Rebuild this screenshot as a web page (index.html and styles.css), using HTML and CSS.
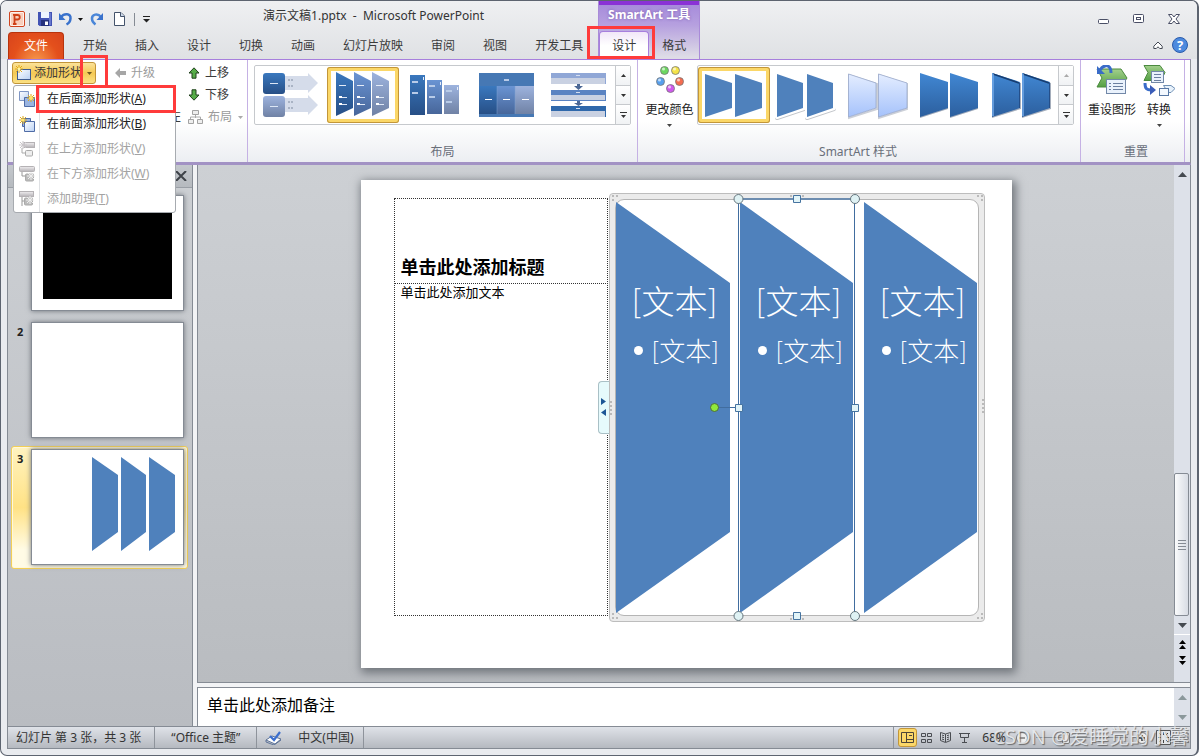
FILE: index.html
```html
<!DOCTYPE html>
<html lang="zh-CN">
<head>
<meta charset="utf-8">
<title>演示文稿1.pptx - Microsoft PowerPoint</title>
<link rel="stylesheet" href="styles.css">
</head>
<body>
<svg class="defs" width="0" height="0" aria-hidden="true">
  <defs>
    <linearGradient id="b1" x1="0" y1="0" x2="0" y2="1"><stop offset="0" stop-color="#3a78be"/><stop offset="1" stop-color="#274f86"/></linearGradient>
    <linearGradient id="b2" x1="0" y1="0" x2="0" y2="1"><stop offset="0" stop-color="#6a94d3"/><stop offset="1" stop-color="#47669a"/></linearGradient>
    <linearGradient id="b3" x1="0" y1="0" x2="0" y2="1"><stop offset="0" stop-color="#9db3de"/><stop offset="1" stop-color="#7082a5"/></linearGradient>
    <linearGradient id="pale" x1="0" y1="0" x2="0" y2="1"><stop offset="0" stop-color="#e4edff"/><stop offset="1" stop-color="#a5c2fb"/></linearGradient>
    <linearGradient id="deep" x1="0" y1="0" x2="0" y2="1"><stop offset="0" stop-color="#4187d3"/><stop offset="1" stop-color="#2c5f9e"/></linearGradient>
    <linearGradient id="page" x1="0" y1="0" x2="1" y2="1"><stop offset="0" stop-color="#fff"/><stop offset="1" stop-color="#b9d0f3"/></linearGradient>
    <linearGradient id="leaf" x1="0" y1="0" x2="0" y2="1"><stop offset="0" stop-color="#a3d08c"/><stop offset="1" stop-color="#54a044"/></linearGradient>
    <linearGradient id="grey" x1="0" y1="0" x2="0" y2="1"><stop offset="0" stop-color="#f0eef0"/><stop offset="1" stop-color="#b5b2b6"/></linearGradient>
    <g id="spark" stroke-width="1"><path d="M4 0v8M0 4h8M1 1l6 6M7 1l-6 6"/></g>
  </defs>
</svg>
<div class="window">
  <header class="header">
    <div class="head-left">
      <div class="title-row">
        <div class="qat">
          <svg width="16" height="16" viewBox="0 0 16 16"><rect x=".5" y=".5" width="15" height="15" rx="1.500" fill="#fff1ea" stroke="#cf4520"/><rect x="2" y="2" width="12" height="12" fill="#f8cfbd"/><path d="M5.500 13V4h3a2.200 2.200 0 0 1 0 4.500H6M4 13h3.500M4 3.800h3" fill="none" stroke="#cf3f16" stroke-width="1.800"/></svg>
          <i class="bar"></i>
          <button class="plain" aria-label="保存"><svg width="14" height="14" viewBox="0 0 14 14"><path d="M0 0h14v14H1.500L0 12.500z" fill="#4253b4"/><path d="M3 0h8v6H3z" fill="#eef4ff"/><path d="M3 8h8v6H3z" fill="#26327c"/><path d="M7 9.500h3V13H7z" fill="#fff"/><path d="M12 1v12" stroke="#8fa0e8"/></svg></button>
          <button class="plain undo" aria-label="撤消"><svg width="14" height="14" viewBox="0 0 14 14"><path d="M2 5C5 1 12 1 11.500 6.500 11.300 9.500 9.500 11.500 7.500 12.500" fill="none" stroke="#3a72cc" stroke-width="2.500"/><path d="M0 1v7h6.500z" fill="#3a72cc"/></svg><svg width="5" height="3" viewBox="0 0 5 3"><path d="M0 0h5L2.500 3z" fill="#111"/></svg></button>
          <button class="plain" aria-label="恢复"><svg width="14" height="14" viewBox="0 0 14 14"><path d="M11 5C8 1 1.500 2 2 7c.2 3 2 4.500 3.500 5.500" fill="none" stroke="#4a86d8" stroke-width="2.500"/><path d="M13 1v7H6.500z" fill="#3a72cc"/></svg></button>
          <button class="plain new" aria-label="新建"><svg width="11" height="14" viewBox="0 0 11 14"><path d="M.5.5h6.500l3.500 3.500v9.500H.5z" fill="#fff" stroke="#44536b"/><path d="M6.500.5v4h4" fill="#cbd8ea" stroke="#44536b"/></svg></button>
          <i class="bar"></i>
          <button class="plain" aria-label="自定义快速访问工具栏"><svg width="7" height="7" viewBox="0 0 7 7"><path d="M0 .5h7" stroke="#222"/><path d="M0 3h7L3.500 6.500z" fill="#222"/></svg></button>
        </div>
        <h1 class="title">演示文稿1.pptx&nbsp; -&nbsp; Microsoft PowerPoint</h1>
      </div>
      <nav class="tabs">
        <button class="file-tab">文件</button>
        <button class="tab">开始</button><button class="tab">插入</button><button class="tab">设计</button><button class="tab">切换</button><button class="tab">动画</button><button class="tab">幻灯片放映</button><button class="tab">审阅</button><button class="tab">视图</button><button class="tab">开发工具</button>
      </nav>
    </div>
    <div class="context">
      <div class="context-name">SmartArt 工具</div>
      <nav class="context-tabs"><button class="tab active">设计</button><button class="tab">格式</button></nav>
      <i class="mark mark-tab"></i>
    </div>
    <div class="head-right">
      <div class="win-buttons">
        <button class="plain" aria-label="最小化"><svg width="12" height="12" viewBox="0 0 12 12"><rect x=".5" y="6.500" width="10" height="4" rx="1" fill="#fff" stroke="#4a4f66"/></svg></button>
        <button class="plain" aria-label="最大化"><svg width="12" height="12" viewBox="0 0 12 12"><rect x=".5" y="1.500" width="10" height="8" rx="1" fill="#fff" stroke="#4a4f66"/><rect x="3.500" y="4.500" width="4" height="2" fill="#fff" stroke="#4a4f66"/></svg></button>
        <button class="plain" aria-label="关闭"><svg width="12" height="12" viewBox="0 0 12 12"><path d="M.5 1.500h3.500l2 2.500 2-2.500h3.500L8 6l3.500 4.500H8L6 8l-2 2.500H.5L4 6z" fill="#fff" stroke="#4a4f66"/></svg></button>
      </div>
      <div class="help-row">
        <button class="plain" aria-label="功能区最小化"><svg width="10" height="9" viewBox="0 0 10 9"><path d="M5 1L.8 5.200v2.300h2.500L5 5.800l1.700 1.700h2.500V5.200z" fill="#fff" stroke="#444a55"/></svg></button>
        <button class="help" aria-label="帮助">?</button>
      </div>
    </div>
  </header>

  <section class="ribbon">
    <div class="group create">
      <div class="commands">
        <div class="split">
          <button class="split-main"><svg width="16" height="16" viewBox="0 0 16 16"><rect x="2.500" y="4.500" width="13" height="10" fill="url(#page)" stroke="#3f5c92"/><use href="#spark" stroke="#e0a818"/><circle cx="4" cy="4" r="1.500" fill="#fff4a0"/></svg><span>添加形状</span></button>
          <button class="split-drop" aria-label="添加形状选项"><svg width="5" height="3"><path d="M0 0h5L2.500 3z" fill="#6b5622"/></svg></button>
        </div>
        <button class="cmd off"><svg width="11" height="10" viewBox="0 0 11 10"><path d="M0 5l5-5v3h6v4H5v3z" fill="#a6a6a6"/></svg>升级</button>
        <button class="cmd"><svg width="12" height="12" viewBox="0 0 12 12"><path d="M6 .8L11 6H8v5.200H4V6H1z" fill="#56ac48" stroke="#20401c"/></svg>上移</button>
        <button class="cmd low"><svg width="12" height="12" viewBox="0 0 12 12"><path d="M6 11.200L11 6H8V.8H4V6H1z" fill="#56ac48" stroke="#20401c"/></svg>下移</button>
        <button class="cmd rtl" aria-label="从右向左">左</button>
        <button class="cmd off wide"><svg width="15" height="14" viewBox="0 0 15 14"><path d="M7.500 4v4M2.500 9V7h10v2" fill="none" stroke="#aaa"/><path d="M4.500.5h6v4h-6zM.5 9.500h5v4h-5zM9.500 9.500h5v4h-5z" fill="#eee" stroke="#a3a3a3"/></svg>布局<svg class="caret" width="5" height="3"><path d="M0 0h5L2.500 3z" fill="#aaa"/></svg></button>
      </div>
      <i class="mark mark-drop"></i>
      <div class="menu" role="menu">
        <button class="item" role="menuitem"><svg width="16" height="16" viewBox="0 0 16 16"><path d="M.5.5h9v9h-9z" fill="url(#page)" stroke="#7f96c4"/><path d="M5.500 6.500h10v9h-10z" fill="#9ab4e0" stroke="#4f6ca6"/><use href="#spark" x="8" y="3" stroke="#e0a818"/><circle cx="12" cy="7" r="2" fill="#ffe66a"/></svg><span>在后面添加形状(<u>A</u>)</span></button>
        <button class="item" role="menuitem"><svg width="16" height="16" viewBox="0 0 16 16"><path d="M3.500 2.500h8v8h-8z" fill="#9ab4e0" stroke="#4f6ca6"/><path d="M5.500 5.500h10v10h-10z" fill="url(#page)" stroke="#4f6ca6"/><use href="#spark" stroke="#e0a818"/><circle cx="4" cy="4" r="1.500" fill="#ffe66a"/></svg><span>在前面添加形状(<u>B</u>)</span></button>
        <button class="item" role="menuitem" disabled><svg width="16" height="16" viewBox="0 0 16 16"><rect x="5" y="1.500" width="10.500" height="5" fill="url(#grey)" stroke="#b5b2b5"/><path d="M3 7v5h3" fill="none" stroke="#aaa"/><rect x="6.500" y="9.500" width="7" height="5.500" rx="1" fill="#eee" stroke="#aaa"/><use href="#spark" stroke="#c9c5c9"/></svg><span>在上方添加形状(<u>V</u>)</span></button>
        <button class="item" role="menuitem" disabled><svg width="16" height="16" viewBox="0 0 16 16"><rect x=".5" y=".5" width="15" height="5" rx="1" fill="url(#grey)" stroke="#b5b2b5"/><path d="M3 6v4h4" fill="none" stroke="#999"/><rect x="6.500" y="8" width="8" height="7" rx="1" fill="#bbb" stroke="#aaa"/><use href="#spark" x="8" y="6" stroke="#eee"/></svg><span>在下方添加形状(<u>W</u>)</span></button>
        <button class="item" role="menuitem" disabled><svg width="16" height="16" viewBox="0 0 16 16"><rect x=".5" y=".5" width="14" height="5" fill="url(#grey)" stroke="#b5b2b5"/><path d="M3 6v9M3 10h4" fill="none" stroke="#999"/><rect x="5.500" y="7" width="8" height="7" rx="1" fill="#bbb" stroke="#aaa"/><use href="#spark" x="7" y="5" stroke="#eee"/></svg><span>添加助理(<u>T</u>)</span></button>
        <i class="mark mark-item"></i>
      </div>
    </div>

    <div class="group layouts">
      <div class="gallery">
        <button class="thumb" aria-label="垂直块列表"><svg width="72" height="56" viewBox="0 0 72 56"><path d="M30 9h23V6l10 10-10 10v-3H30zM30 31h23v-3l10 10-10 10v-3H30z" fill="#d5dcea"/><rect x="8" y="6" width="22" height="21" rx="3" fill="url(#b1)"/><rect x="8" y="29" width="22" height="21" rx="3" fill="url(#b3)"/><path d="M15 16.500h8M15 39.500h8" stroke="#dce6f5"/><path d="M33 13h6M33 19h6M33 35h6M33 41h6" stroke="#a9b3c4" stroke-width="2" stroke-dasharray="2 1"/></svg></button>
        <button class="thumb on" aria-label="梯形列表"><svg width="72" height="56" viewBox="0 0 72 56"><path d="M9 5l17 9v27L9 49z" fill="url(#b1)"/><path d="M27 5l17 9v27l-17 8z" fill="url(#b2)"/><path d="M45 5l17 9v27l-17 8z" fill="url(#b3)"/><path d="M12 18.500h7M30 18.500h7M49 18.500h7" stroke="#e4ecf8"/><path d="M12 30.500h8M12 37.500h8M30 30.500h8M30 37.500h8M49 30.500h8M49 37.500h8" stroke="#dfe8f6"/><path d="M12 30h3M12 37h3M30 30h3M30 37h3M49 30h3M49 37h3" stroke="#fff" stroke-width="2"/></svg></button>
        <button class="thumb" aria-label="降序块列表"><svg width="72" height="56" viewBox="0 0 72 56"><path d="M11 8h15v40H11z" fill="url(#b1)"/><path d="M28 13h15v34H28z" fill="url(#b2)"/><path d="M45 18h15v29H45z" fill="url(#b3)"/><path d="M13 15h6M13 26h6M30 19h6M30 30h6M47 24h6M47 35h6" stroke="#b8cbe8" stroke-width="2"/><path d="M24.500 10v3M41.500 15v3M58.500 20v3" stroke="#e8eef8"/></svg></button>
        <button class="thumb" aria-label="表格列表"><svg width="72" height="56" viewBox="0 0 72 56"><path d="M8 6h55v44H8z" fill="#4678b4"/><path d="M8 19h18v28H8z" fill="url(#b1)"/><path d="M26 19h18v28H26z" fill="url(#b2)"/><path d="M44 19h19v28H44z" fill="url(#b3)"/><path d="M33 13h5" stroke="#b8cbe8" stroke-width="2"/><path d="M14 32.500h7M32 32.500h7M51 32.500h7" stroke="#fff"/><path d="M26 19v28M44 19v28" stroke="#7fa0d0" stroke-width=".5"/></svg></button>
        <button class="thumb" aria-label="分段流程"><svg width="72" height="56" viewBox="0 0 72 56"><path d="M8 6h55v11H8z" fill="#90a7d6"/><path d="M8 23h55v11H8z" fill="#5a83c2"/><path d="M8 39h55v11H8z" fill="#2f68ab"/><path d="M8 11h54v6H8zM8 28h54v5H8zM8 44h54v6H8z" fill="#c9d1e2"/><path d="M34 17h3v2h3l-4.500 4L31 19h3zM34 34h3v2h3l-4.500 3L31 36h3z" fill="#4c6896"/><path d="M33 8.500h4M33 25.500h4M33 41.500h4" stroke="#d4def0"/></svg></button>
        <div class="stepper"><button aria-label="上一行"><svg width="5" height="3"><path d="M0 3h5L2.500 0z" fill="#333"/></svg></button><button aria-label="下一行"><svg width="5" height="3"><path d="M0 0h5L2.500 3z" fill="#333"/></svg></button><button aria-label="其他布局"><svg width="7" height="6"><path d="M0 .5h7" stroke="#333"/><path d="M1 3h5L3.500 6z" fill="#333"/></svg></button></div>
      </div>
      <div class="label">布局</div>
    </div>

    <div class="group styles">
      <div class="style-row">
        <button class="big colors"><svg width="28" height="30" viewBox="0 0 28 30"><g stroke="#777" stroke-width=".8"><circle cx="8.500" cy="5.500" r="4" fill="#6cd860"/><circle cx="19.500" cy="5.500" r="4" fill="#f5e348"/><circle cx="4.500" cy="16.500" r="4" fill="#56a0ee"/><circle cx="23.500" cy="16.500" r="4" fill="#f46c50"/><circle cx="14.500" cy="23.500" r="4" fill="#cf58ec"/></g><g fill="#fff" opacity=".65"><circle cx="7.500" cy="4" r="1.500"/><circle cx="18.500" cy="4" r="1.500"/><circle cx="3.500" cy="15" r="1.500"/><circle cx="22.500" cy="15" r="1.500"/><circle cx="13.500" cy="22" r="1.500"/></g></svg><span>更改颜色</span><svg width="5" height="3"><path d="M0 0h5L2.500 3z" fill="#444"/></svg></button>
        <div class="gallery">
          <button class="thumb on" aria-label="简单填充"><svg width="72" height="56" viewBox="0 0 72 56"><path d="M7 7l27 9v25L7 50zM37 7l27 9v25l-27 9z" fill="#4f81bc"/></svg></button>
          <button class="thumb" aria-label="白色轮廓"><svg width="72" height="56" viewBox="0 0 72 56"><path d="M7 8l27 9v25L7 51zM37 8l27 9v25l-27 9z" fill="none" stroke="#c3c6cb" stroke-width="4" stroke-linejoin="round"/><path d="M7 7l27 9v25L7 50zM37 7l27 9v25l-27 9z" fill="none" stroke="#fff" stroke-width="4" stroke-linejoin="round"/><path d="M7 7l26 9v25L7 50zM37 7l26 9v25l-26 9z" fill="#4f81bc"/></svg></button>
          <button class="thumb" aria-label="细微效果"><svg width="72" height="56" viewBox="0 0 72 56"><path d="M7 8l28 9v25L7 51zM37 8l28 9v25l-28 9z" fill="none" stroke="#ccd0d8" stroke-width="2"/><path d="M6.500 7L34 16v25L6.500 50zM36.500 7L65 16v25l-28.500 9z" fill="url(#pale)" stroke="#9aa9cc" stroke-width=".8"/></svg></button>
          <button class="thumb" aria-label="中等效果"><svg width="72" height="56" viewBox="0 0 72 56"><path d="M6 7l28 9v26L6 51zM36 7l28 9v26l-28 9z" fill="#9faaba"/><path d="M6 6l28 9v26L6 50zM36 6l28 9v26l-28 9z" fill="url(#deep)"/></svg></button>
          <button class="thumb" aria-label="强烈效果"><svg width="72" height="56" viewBox="0 0 72 56"><path d="M6 7l29 9v26L6 51zM36 7l29 9v26l-29 9z" fill="#a5aebc"/><path d="M6 6l28 9v26L6 50zM36 6l28 9v26l-28 9z" fill="url(#deep)"/><path d="M7 7l26 9M37 7l26 9" stroke="#173d70" stroke-width="1.500"/><path d="M7 7v42M37 7v42" stroke="#74abea" stroke-width="1.500"/><path d="M33.500 16v25M63.500 16v25" stroke="#244f8a"/></svg></button>
          <div class="stepper"><button aria-label="上一行样式" disabled><svg width="5" height="3"><path d="M0 3h5L2.500 0z" fill="#aaa"/></svg></button><button aria-label="下一行样式"><svg width="5" height="3"><path d="M0 0h5L2.500 3z" fill="#333"/></svg></button><button aria-label="其他样式"><svg width="7" height="6"><path d="M0 .5h7" stroke="#333"/><path d="M1 3h5L3.500 6z" fill="#333"/></svg></button></div>
        </div>
      </div>
      <div class="label">SmartArt 样式</div>
    </div>

    <div class="group reset">
      <div class="reset-row">
        <button class="big"><svg width="32" height="30" viewBox="0 0 32 30"><path d="M1 4h24l6 9-6 9H1l5-9z" fill="url(#leaf)" stroke="#4b8a3f"/><rect x="10.500" y="14.500" width="19" height="14" fill="#eaf2fc" stroke="#7288a8"/><path d="M13 18.500h2M17 18.500h10M13 21.500h2M17 21.500h10M13 24.500h2M17 24.500h10" stroke="#6a7fa0"/><path d="M4 5C8-1 15-1 15 8" fill="none" stroke="#3a6cc8" stroke-width="3"/><path d="M1 1v8h8z" fill="#3a6cc8"/></svg><span>重设图形</span></button>
        <button class="big"><svg width="32" height="32" viewBox="0 0 32 32"><path d="M1 .5h16l5 7-4 8H1l4-8z" fill="url(#leaf)" stroke="#4b8a3f"/><rect x="8.500" y="6.500" width="12" height="11" fill="#eaf2fc" stroke="#7288a8"/><path d="M11 9.500h7M11 12.500h7M11 15.500h7" stroke="#6a7fa0"/><path d="M2 18c0 6 2 7 6 7" fill="none" stroke="#3a6cc8" stroke-width="3"/><path d="M7 20l6 5-6 5z" fill="#3a5cb8"/><path d="M20.500 20.500H28l4 3-4 4h-7.500l2-4z" fill="#e8f2fb" stroke="#6f8fb4"/><rect x="16.500" y="23.500" width="9" height="7" fill="#f4f9ff" stroke="#5878a4"/></svg><span>转换</span><svg width="5" height="3"><path d="M0 0h5L2.500 3z" fill="#444"/></svg></button>
      </div>
      <div class="label">重置</div>
    </div>
  </section>

  <main class="work">
    <aside class="panel">
      <div class="panel-head"><button class="plain" aria-label="关闭窗格"><svg width="12" height="10" viewBox="0 0 12 10"><path d="M1 0l10 10M11 0L1 10" stroke="#3e4248" stroke-width="2"/></svg></button></div>
      <ol class="slides">
        <li class="entry"><b></b><div class="mini"><div class="black"></div></div></li>
        <li class="entry"><b>2</b><div class="mini"></div></li>
        <li class="entry current"><b>3</b><div class="mini"><svg width="151" height="114" viewBox="0 0 151 114"><path d="M60 7l26 18v57L60 101zM89 7l25 18v57l-25 19zM117 7l26 18v57l-26 19z" fill="#4f81bc"/></svg></div></li>
      </ol>
    </aside>
    <div class="editor">
      <div class="stage">
        <div class="stage-view">
          <article class="slide">
            <h2 class="slide-title">单击此处添加标题</h2>
            <p class="slide-body">单击此处添加文本</p>
            <div class="frame"><div class="frame-inner"></div></div>
            <svg class="art" width="651" height="488" viewBox="0 0 651 488">
              <path d="M255 22l114 81v249l-114 81zM379 22l113 81v249l-113 81zM503 22l113 81v249l-113 81z" fill="#4f81bc"/>
              <g fill="#aaa"><circle cx="252" cy="16" r="1"/><circle cx="256" cy="16" r="1"/><circle cx="252" cy="20" r="1"/><circle cx="617" cy="16" r="1"/><circle cx="621" cy="16" r="1"/><circle cx="621" cy="20" r="1"/><circle cx="252" cy="438" r="1"/><circle cx="256" cy="438" r="1"/><circle cx="252" cy="434" r="1"/><circle cx="617" cy="438" r="1"/><circle cx="621" cy="438" r="1"/><circle cx="621" cy="434" r="1"/><circle cx="250" cy="222" r="1"/><circle cx="250" cy="226" r="1"/><circle cx="250" cy="230" r="1"/><circle cx="250" cy="234" r="1"/><circle cx="622" cy="220" r="1"/><circle cx="622" cy="224" r="1"/><circle cx="622" cy="228" r="1"/><circle cx="622" cy="232" r="1"/><circle cx="430" cy="16" r="1"/><circle cx="434" cy="16" r="1"/><circle cx="438" cy="16" r="1"/><circle cx="442" cy="16" r="1"/><circle cx="430" cy="439" r="1"/><circle cx="434" cy="439" r="1"/><circle cx="438" cy="439" r="1"/><circle cx="442" cy="439" r="1"/></g>
              <path d="M378.500 22v411" stroke="#fff"/>
              <path d="M377.500 19.500V436M493.500 19.500V436" stroke="#416d9f"/><path d="M378 19h116" stroke="#6d8db0" stroke-width="2"/><path d="M357 227.500h18" stroke="#416d9f"/>
              <g fill="#dff2f4" stroke="#66767e"><circle cx="377.500" cy="19" r="4.500"/><circle cx="494" cy="19" r="4.500"/><circle cx="377.500" cy="436" r="4.500"/><circle cx="494" cy="436" r="4.500"/></g>
              <g fill="#e2f4f8" stroke="#4674a0"><path d="M432.500 15.500h7v7h-7zM432.500 432.500h7v7h-7zM374.500 224.500h7v7h-7zM490.500 224.500h7v7h-7z"/></g>
              <circle cx="353.500" cy="227.500" r="4" fill="#90e83a" stroke="#4d6b3c"/>
            </svg>
            <div class="shape-text first"><strong>[文本]</strong><span>[文本]</span></div>
            <div class="shape-text second"><strong>[文本]</strong><span>[文本]</span></div>
            <div class="shape-text third"><strong>[文本]</strong><span>[文本]</span></div>
            <button class="pane-tab" aria-label="文本窗格"><svg width="5" height="18" viewBox="0 0 5 18"><path d="M0 0l5 3.500L0 7zM5 11v7l-5-3.500z" fill="#1d5696"/></svg></button>
          </article>
        </div>
        <div class="scroll">
          <button class="arrow" aria-label="向上滚动"><svg width="9" height="5"><path d="M0 5h9L4.500 0z" fill="#454a50"/></svg></button>
          <div class="track"><div class="grip"><i></i><i></i><i></i><i></i></div></div>
          <button class="arrow" aria-label="向下滚动"><svg width="9" height="5"><path d="M0 0h9L4.500 5z" fill="#454a50"/></svg></button>
          <div class="page-buttons">
            <button class="plain" aria-label="上一张幻灯片"><svg width="7" height="9"><path d="M0 4h7L3.500 0zM0 9h7L3.500 5z"/></svg></button>
            <button class="plain" aria-label="下一张幻灯片"><svg width="7" height="9"><path d="M0 0h7L3.500 4zM0 5h7L3.500 9z"/></svg></button>
          </div>
        </div>
      </div>
      <div class="notes">
        <p class="notes-text">单击此处添加备注</p>
        <div class="scroll small">
          <button class="arrow" aria-label="备注向上滚动"><svg width="9" height="5"><path d="M0 5h9L4.500 0z" fill="#8b989b"/></svg></button>
          <button class="arrow" aria-label="备注向下滚动"><svg width="9" height="5"><path d="M0 0h9L4.500 5z" fill="#8b989b"/></svg></button>
        </div>
      </div>
    </div>
  </main>

  <footer class="status">
    <span class="cell count">幻灯片 第 3 张，共 3 张</span>
    <span class="cell theme">“Office 主题”</span>
    <span class="cell lang"><svg width="17" height="14" viewBox="0 0 17 14"><path d="M1 9l6-4 9 3-6 5z" fill="#fff" stroke="#5d7398"/><path d="M1 9v2l8 3 7-5" fill="none" stroke="#5d7398"/><path d="M5 5l4 4 6-8" fill="none" stroke="#3c6fce" stroke-width="2.200"/></svg>中文(中国)</span>
    <div class="status-right">
      <button class="view on" aria-label="普通视图"><svg width="13" height="11" viewBox="0 0 13 11"><path d="M.5.5h12v10H.5zM5.500.5v10M5.500 7.500h7M8 3.500h3" fill="none" stroke="#4c4538"/></svg></button>
      <button class="view" aria-label="幻灯片浏览"><svg width="11" height="10" viewBox="0 0 11 10"><path d="M.5.500h4v3h-4zM6.500.5h4v3h-4zM.5 6.500h4v3h-4zM6.500 6.500h4v3h-4z" fill="none" stroke="#4a4d52"/></svg></button>
      <button class="view" aria-label="阅读视图"><svg width="11" height="11" viewBox="0 0 11 11"><path d="M5.500 2L.5.500v8l5 2 5-2v-8zM5.500 2v8M2 3l2 .7M2 5l2 .7M2 7l2 .7M9 3l-2 .7M9 5l-2 .7M9 7l-2 .7" fill="none" stroke="#4a4d52"/></svg></button>
      <button class="view" aria-label="幻灯片放映视图"><svg width="11" height="10" viewBox="0 0 11 10"><path d="M0 .5h11M1.500.5v4h8v-4M5.500 5v4M3 9.500h5" fill="none" stroke="#4a4d52"/></svg></button>
      <span class="percent">68%</span>
      <button class="plain" aria-label="缩小"><svg width="12" height="12" viewBox="0 0 12 12"><circle cx="6" cy="6" r="5.500" fill="#eee" stroke="#777"/><path d="M3 6h6" stroke="#444"/></svg></button>
      <input class="zoom" type="range" min="10" max="400" value="130" aria-label="显示比例">
      <button class="plain" aria-label="放大"><svg width="12" height="12" viewBox="0 0 12 12"><circle cx="6" cy="6" r="5.500" fill="#eee" stroke="#777"/><path d="M3 6h6M6 3v6" stroke="#333" stroke-width="1.500"/></svg></button>
      <button class="plain fit" aria-label="适应窗口"><svg width="15" height="15" viewBox="0 0 15 15"><path d="M.5.5h14v14H.5z" fill="#e4e6e8" stroke="#555"/><path d="M7.500 2v3M7.500 10v3M2 7.500h3M10 7.500h3M3 3l2 2M12 3l-2 2M3 12l2-2M12 12l-2-2" stroke="#444"/></svg></button>
      <svg width="10" height="10" viewBox="0 0 10 10"><path d="M8 0h2v2H8zM4 4h2v2H4zM8 4h2v2H8zM0 8h2v2H0zM4 8h2v2H4zM8 8h2v2H8z" fill="#8d94a2"/></svg>
    </div>
  </footer>
  <div class="watermark">CSDN @爱睡觉的小馨</div>
</div>
</body>
</html>
```
FILE: styles.css
```css
* { box-sizing: border-box; }
body {
  margin: 0;
  background: #fff;
  font: 12px/16px "Noto Sans", "Noto Sans CJK SC", sans-serif;
  color: #3b3b3b;
}
button { font: inherit; color: inherit; border: 0; padding: 0; margin: 0; background: none; white-space: nowrap; }
h1, h2, p, ol { margin: 0; padding: 0; font-weight: normal; }
svg { display: block; flex: none; }
.defs { position: absolute; }
.plain { display: flex; align-items: center; }

.window {
  position: relative;
  display: flex;
  flex-direction: column;
  height: 100vh;
  min-height: 600px;
  padding: 0 6px 6px;
  border: 1px solid #5d6470;
  border-right-width: 2px;
  border-radius: 7px;
  background: #e9ebef;
  overflow: hidden;
}

/* title bar and tabs */
.header {
  display: flex;
  margin: 0 -6px;
  padding: 0 6px;
  background: linear-gradient(#eff0f2, #dfe1e4);
}
.head-left { display: flex; flex-direction: column; padding-right: 1px; }
.title-row { display: flex; height: 30px; align-items: center; }
.qat { display: flex; align-items: center; gap: 7px; padding: 6px 0 0 2px; }
.qat .bar { width: 1px; height: 13px; margin: 0 1px 0 -3px; background: #858b94; }
.qat .new { margin: 0 5px 0 3px; }
.undo { gap: 5px; }
.title { flex: 1; text-align: center; font-size: 12px; color: #333; }
.tabs, .context-tabs { display: flex; height: 28px; align-items: stretch; }
.tab { padding: 1px 14px 0; color: #3b3b3b; }
.file-tab {
  width: 56px;
  margin: 1px 5px 0 1px;
  border: 1px solid #b8330c;
  border-bottom: 0;
  border-radius: 4px 4px 0 0;
  color: #fff;
  background: radial-gradient(ellipse at 50% 120%, #f8a050 0, #e4501c 60%, #d8441c 100%);
}
.context {
  position: relative;
  width: 102px;
  border: 1px solid #a98bd8;
  border-width: 0 1px;
  background: linear-gradient(#8a32d6 4px, #a78cdb 4px, #b6a0df 24px, #dedce6 56px);
}
.context-name { height: 30px; padding-top: 6px; text-align: center; font-weight: bold; color: #fff; text-shadow: 0 0 3px #7b5cae; }
.context-tabs .tab { padding: 1px 13px 0; }
.context-tabs .active {
  border: 1px solid #a77fdd;
  border-bottom: 0;
  border-radius: 4px 4px 0 0;
  padding: 0 12px;
  background: linear-gradient(#f1e6f8, #fff 50%);
}
.head-right { flex: 1; display: flex; flex-direction: column; align-items: flex-end; }
.win-buttons { display: flex; gap: 23px; padding: 12px 11px 0 0; height: 34px; align-items: flex-start; }
.help-row { display: flex; align-items: center; gap: 9px; padding-right: 3px; height: 20px; }
.help {
  width: 16px;
  height: 16px;
  border-radius: 50%;
  border: 1px solid #2a5bab;
  background: #4d8ade;
  color: #fff;
  font-weight: bold;
  font-size: 13px;
  line-height: 14px;
}

/* call-out boxes */
.mark { position: absolute; border: 3px solid #ff3b3b; pointer-events: none; }
.mark-tab { left: -12px; top: 25px; width: 68px; height: 33px; }
.mark-drop { left: 72px; top: -5px; width: 28px; height: 33px; }
.mark-item { left: 22px; top: -1px; right: -1px; height: 28px; }

/* ribbon */
.ribbon {
  display: flex;
  height: 106px;
  border: 1px solid #8d9197;
  border-top-color: #a77fdd;
  border-bottom: 3px solid #a292c4;
  background: linear-gradient(#fff 60%, #eceef2);
}
.group { position: relative; display: flex; flex-direction: column; border-right: 1px solid #c5b1e4; }
.label { margin-top: auto; padding-bottom: 2px; text-align: center; color: #696f7a; }
.create { width: 240px; padding: 2px 0 0 4px; z-index: 5; }
.commands { display: grid; grid-template-columns: 103px 73px 1fr; grid-auto-rows: 22px; }
.cmd { display: flex; align-items: center; gap: 5px; }
.low { grid-column: 3; }
.rtl { grid-column: 2; justify-self: end; padding-right: 7px; }
.off { color: #9b9b9b; }
.caret { margin-left: 1px; }
.split {
  display: flex;
  width: 84px;
  height: 22px;
  border: 1px solid #c29538;
  border-radius: 3px;
  background: linear-gradient(#fbe29a, #f5c954 50%, #fbe184);
}
.split-main { display: flex; align-items: center; gap: 3px; width: 70px; padding-left: 2px; overflow: hidden; border-right: 1px solid #c29538; }
.split-drop { flex: 1; display: grid; place-items: center; }
.menu {
  position: absolute;
  left: 5px;
  top: 25px;
  width: 163px;
  padding: 0 1px 1px;
  border: 1px solid #a7abb0;
  border-radius: 3px;
  background: linear-gradient(90deg, #fff 25px, #dfe1e4 25px, #dfe1e4 26px, #fff 26px);
}
.item { display: flex; align-items: center; gap: 12px; width: 100%; height: 25px; padding-left: 4px; color: #222; }
.item:disabled { color: #a3a3a3; }

.layouts { padding: 5px 6px 0; }
.gallery { display: flex; height: 60px; border: 1px solid #c6c9cd; border-radius: 2px; background: #fff; }
.thumb { display: grid; place-items: center; width: 72px; height: 56px; margin-top: 1px; border-radius: 3px; }
.on.thumb { box-shadow: inset 0 0 0 1px #c2963a, inset 0 0 0 4px #fbd768; }
.stepper { display: flex; flex-direction: column; width: 15px; border-left: 1px solid #c6c9cd; }
.stepper button { flex: 1; display: grid; place-items: center; background: linear-gradient(#fff, #f0f2f4); }
.stepper button + button { border-top: 1px solid #c6c9cd; }
.styles { padding: 5px 6px 0 4px; }
.style-row, .reset-row { display: flex; }
.big { display: flex; flex-direction: column; align-items: center; height: 62px; color: #222; }
.big > span { margin: auto 0 6px; }
.big > span:last-child { margin-bottom: 9px; }
.colors { width: 55px; }
.reset { padding: 5px 0 0 7px; width: 104px; }
.reset-row { gap: 7px; }

/* slide list */
.work { flex: 1; display: flex; min-height: 0; border-left: 1px solid #858b94; border-right: 1px solid #858b94; }
.panel {
  width: 185px;
  border-right: 1px solid #858b94;
  background: linear-gradient(#cdd0d4, #b9bcc1);
}
.panel-head { display: flex; justify-content: flex-end; height: 23px; padding-right: 5px; border-bottom: 1px solid #9a9fa6; background: linear-gradient(#c4c8cd, #b6babf); }
.slides { display: flex; flex-direction: column; gap: 4px; padding: 4px 4px 0 3px; list-style: none; }
.entry { display: flex; height: 123px; padding: 2px 3px; border: 1px solid transparent; border-radius: 3px; }
.entry b { width: 16px; padding: 2px 0 0 2px; font-size: 11px; color: #222; }
.mini { flex: 1; height: 116px; border: 1px solid #858b94; background: #fff; box-shadow: 0 0 5px #6c7178; }
.black { height: 92px; margin: 11px; background: #000; }
.current { border-color: #f3cf55; background: linear-gradient(#fff3c0, #ffe285 50%, #fffbe5 85%); box-shadow: inset 0 0 0 1px #fff8dc; }

/* editor */
.editor { flex: 1; min-width: 0; display: flex; flex-direction: column; gap: 4px; padding-left: 4px; background: #f2f3f5; }
.stage { flex: 1; min-height: 0; display: flex; border-left: 1px solid #858b94; border-bottom: 1px solid #858b94; background: linear-gradient(#cdd0d4, #b9bcc0); }
.stage-view { flex: 1; min-width: 0; display: grid; place-content: center; overflow: hidden; }
.slide { position: relative; width: 651px; height: 488px; background: #fff; box-shadow: 2px 3px 9px 2px #70757b; }
.slide-title, .slide-body { position: absolute; left: 33px; width: 214px; border: 1px dotted #333; color: #000; padding: 0 6px; }
.slide-title { top: 18px; height: 86px; padding-top: 57px; font: bold 18px/24px "Liberation Serif", "Noto Sans CJK SC", sans-serif; }
.slide-body { top: 103px; height: 333px; font-size: 13px; line-height: 17px; }
.frame { position: absolute; left: 248px; top: 13px; width: 376px; height: 429px; padding: 5px; border: 1px solid #bdbdbd; border-radius: 4px; background: #ebebeb; }
.frame-inner { height: 100%; border: 1px solid #b5b5b5; border-radius: 9px; background: #fff; }
.art { position: absolute; left: 0; top: 0; }
.shape-text { position: absolute; top: 97px; width: 114px; color: #fff; font-family: Lato, "Noto Sans CJK SC", sans-serif; font-weight: 300; text-align: center; }
.shape-text strong { display: block; padding-left: 4px; font-size: 33px; line-height: 48px; font-weight: 300; }
.shape-text span { display: flex; align-items: center; gap: 9px; padding-left: 18px; font-size: 26px; line-height: 52px; }
.shape-text span::before { content: ""; width: 9px; height: 9px; border-radius: 50%; background: #fff; }
.first { left: 255px; }
.second { left: 379px; }
.third { left: 503px; }
.pane-tab { position: absolute; left: 237px; top: 201px; width: 11px; height: 53px; display: grid; place-items: center; border: 1px solid #a9c0c6; border-right: 0; border-radius: 4px 0 0 4px; background: #e6fafc; }

.scroll { display: flex; flex-direction: column; width: 16px; background: #dde1e9; }
.arrow { display: grid; place-items: center; height: 18px; }
.track { flex: 1; display: flex; flex-direction: column; justify-content: flex-end; }
.grip { height: 33%; display: flex; flex-direction: column; justify-content: center; align-items: center; gap: 2px; margin-right: 1px; border: 1px solid #858b94; border-radius: 2px; background: linear-gradient(90deg, #fafbfc, #d8dce4); }
.grip i { width: 8px; height: 1px; background: #858b94; }
.page-buttons { display: flex; flex-direction: column; align-items: center; gap: 7px; height: 48px; padding-top: 5px; border-top: 1px solid #fff; }
.notes { display: flex; height: 39px; border-left: 1px solid #858b94; border-top: 1px solid #858b94; background: #fff; }
.notes-text { flex: 1; padding: 5px 9px; font-size: 16px; line-height: 24px; color: #000; }
.small { justify-content: space-between; }

/* status bar */
.status { display: flex; align-items: center; height: 23px; border: 1px solid #858b94; background: linear-gradient(#dfe2e8, #b5b9c0); color: #333; }
.cell { display: flex; align-items: center; gap: 16px; height: 100%; padding: 0 9px 0 8px; border-right: 1px solid #8e939b; }
.count { padding-right: 13px; }
.theme { padding: 0 16px; }
.lang { padding-right: 9px; }
.status-right { display: flex; align-items: center; gap: 8px; height: 100%; margin-left: auto; padding: 0 1px 0 4px; border-left: 1px solid #8e939b; }
.view.on { margin-right: -4px; padding: 3px 2px; border: 1px solid #c2963a; border-radius: 3px; background: #fbd768; }
.percent { margin: 0 2px 0 4px; }
.zoom { appearance: none; width: 92px; height: 12px; margin: 0; background: linear-gradient(transparent 5px, #8a9098 5px, #8a9098 6px, transparent 6px); }
.zoom::-webkit-slider-thumb { appearance: none; width: 8px; height: 12px; border: 1px solid #777; border-radius: 2px; background: #eef0f2; }
.watermark { position: absolute; right: 8px; bottom: 4px; font-size: 20px; line-height: 28px; color: #e8eaed; opacity: 0.8; text-shadow: 1px 1px 1px #555; white-space: nowrap; pointer-events: none; }
```
